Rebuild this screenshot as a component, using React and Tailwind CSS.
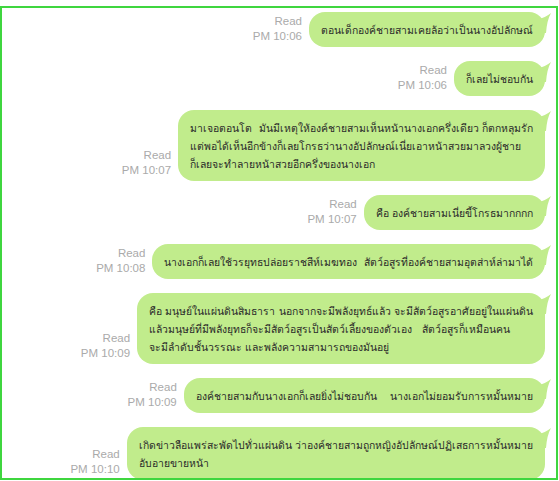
import React from "react";

const msgs = [
  { t: "ตอนเด็กองค์ชายสามเคยล้อว่าเป็นนางอัปลักษณ์", time: "PM 10:06" },
  { t: "ก็เลยไม่ชอบกัน", time: "PM 10:06" },
  {
    t: "มาเจอตอนโต  มันมีเหตุให้องค์ชายสามเห็นหน้านางเอกครึ่งเดียว ก็ตกหลุมรัก\nแต่พอได้เห็นอีกข้างก็เลยโกรธว่านางอัปลักษณ์เนี่ยเอาหน้าสวยมาลวงผู้ชาย\nก็เลยจะทำลายหน้าสวยอีกครึ่งของนางเอก",
    time: "PM 10:07",
  },
  { t: "คือ องค์ชายสามเนี่ยขี้โกรธมากกกก", time: "PM 10:07" },
  {
    t: "นางเอกก็เลยใช้วรยุทธปล่อยราชสีห์เมฆทอง  สัตว์อสูรที่องค์ชายสามอุตส่าห์ล่ามาได้",
    time: "PM 10:08",
  },
  {
    t: "คือ มนุษย์ในแผ่นดินสิมธารา นอกจากจะมีพลังยุทธ์แล้ว จะมีสัตว์อสูรอาศัยอยู่ในแผ่นดิน\nแล้วมนุษย์ที่มีพลังยุทธก็จะมีสัตว์อสูรเป็นสัตว์เลี้ยงของตัวเอง   สัตว์อสูรก็เหมือนคน\nจะมีลำดับชั้นวรรณะ และพลังความสามารถของมันอยู่",
    time: "PM 10:09",
  },
  {
    t: "องค์ชายสามกับนางเอกก็เลยยิ่งไม่ชอบกัน    นางเอกไม่ยอมรับการหมั้นหมาย",
    time: "PM 10:09",
  },
  {
    t: "เกิดข่าวลือแพร่สะพัดไปทั่วแผ่นดิน ว่าองค์ชายสามถูกหญิงอัปลักษณ์ปฏิเสธการหมั้นหมาย\nอับอายขายหน้า",
    time: "PM 10:10",
  },
];

function Tail() {
  return (
    <svg
      className="absolute right-[-7px] top-[1px]"
      width="14"
      height="20"
      viewBox="0 0 14 20"
    >
      <path d="M0 6 Q7 5 13 0 Q9 7 8 20 L0 20 Z" fill="#c1ec8c" />
    </svg>
  );
}

export default function App() {
  return (
    <div className="w-[559px] h-[481px] bg-white pt-[6px] font-['Liberation_Sans',sans-serif]">
      <div className="w-[558px] h-[474px] border-2 border-[#3fd63f] overflow-hidden">
        <div className="flex flex-col items-end gap-[14px] pt-[4px] pr-[11px]">
          {msgs.map((m, i) => (
            <div key={i} className="flex items-end gap-[7px]">
              <div className="flex flex-col items-end text-[11.5px] leading-[15px] text-[#aaaaaa] pb-[3px]">
                <span>Read</span>
                <span>{m.time}</span>
              </div>
              <div className="relative">
                <div className="relative z-10 bg-[#c1ec8c] rounded-[16px] px-[12px] py-[8.5px] text-[10.4px] leading-[18px] text-[#2a2a2a] whitespace-pre font-['Tahoma','DejaVu_Sans',sans-serif]">
                  {m.t}
                </div>
                <Tail />
              </div>
            </div>
          ))}
        </div>
      </div>
    </div>
  );
}
